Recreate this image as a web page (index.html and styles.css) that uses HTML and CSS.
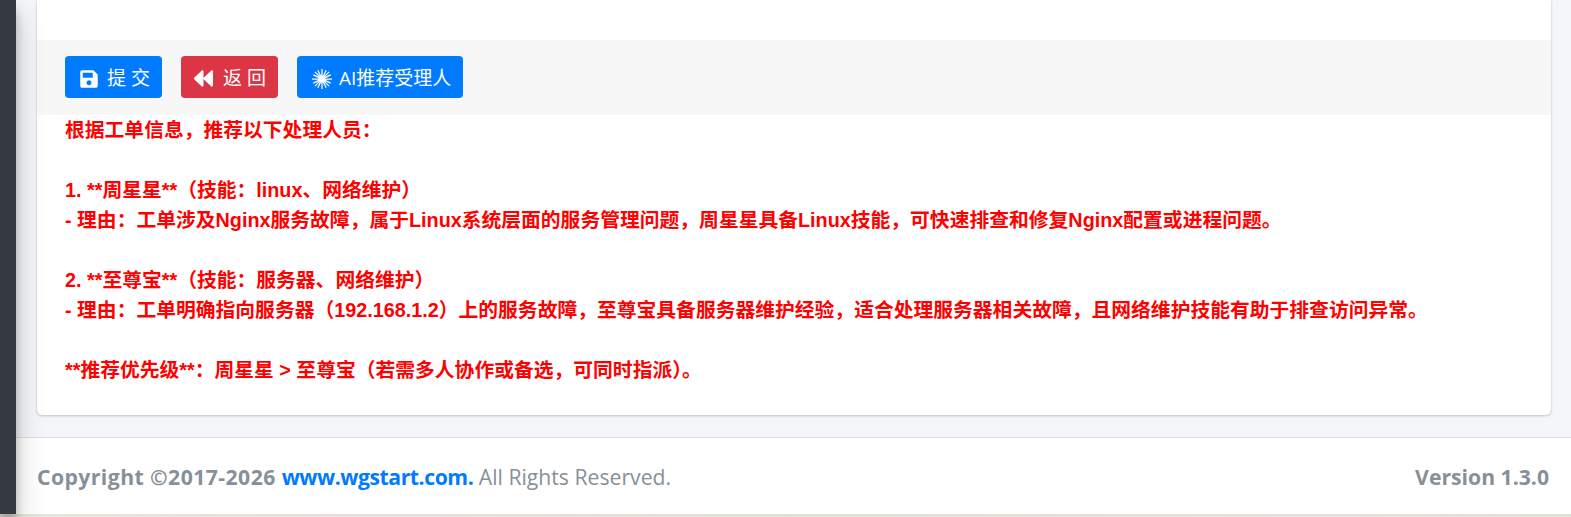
FILE: index.html
```html
<!DOCTYPE html>
<html lang="en">
<head>
  <meta charset="UTF-8">
  <meta name="viewport" content="width=device-width, initial-scale=1.0">
  <title>工单</title>
  <link rel="stylesheet" href="styles.css">
</head>
<body>
  <div class="wrapper">
    <aside class="sidebar"></aside>
    <div class="content-wrapper">
      <main class="content">
        <div class="card">
          <div class="card-top"></div>
          <div class="card-footer">
            <button type="button" class="btn btn-primary btn-save">
              <svg class="icon" viewBox="0 0 448 512"><path d="M433.941 129.941l-83.882-83.882A48 48 0 0 0 316.118 32H48C21.49 32 0 53.49 0 80v352c0 26.51 21.49 48 48 48h352c26.51 0 48-21.49 48-48V163.882a48 48 0 0 0-14.059-33.941zM224 416c-35.346 0-64-28.654-64-64 0-35.346 28.654-64 64-64s64 28.654 64 64c0 35.346-28.654 64-64 64zm96-304.52V212c0 6.627-5.373 12-12 12H76c-6.627 0-12-5.373-12-12V108c0-6.627 5.373-12 12-12h228.52c3.183 0 6.235 1.264 8.485 3.515l3.48 3.48A11.996 11.996 0 0 1 320 111.48z"/></svg>
              <span>提 交</span>
            </button>
            <button type="button" class="btn btn-danger btn-back">
              <svg class="icon icon-back" viewBox="0 56 512 400" preserveAspectRatio="none"><path d="M11.5 280.6l192 160c20.6 17.2 52.5 2.8 52.5-24.6V96c0-27.4-31.9-41.8-52.5-24.6l-192 160c-15.3 12.8-15.3 36.4 0 49.2zm256 0l192 160c20.6 17.2 52.5 2.8 52.5-24.6V96c0-27.4-31.9-41.8-52.5-24.6l-192 160c-15.3 12.8-15.3 36.4 0 49.2z"/></svg>
              <span>返 回</span>
            </button>
            <button type="button" class="btn btn-primary btn-ai">
              <svg class="icon icon-burst" viewBox="0 0 24 24"><circle cx="12" cy="12" r="3.5"/><path d="M12 0v24M0 12h24M3.5 3.5l17 17M20.5 3.5l-17 17M7 1.5l10 21M17 1.5L7 22.5M1.5 7l21 10M22.5 7l-21 10"/></svg>
              <span>AI推荐受理人</span>
            </button>
          </div>
          <div class="recommend">根据工单信息，推荐以下处理人员：

1. **周星星**（技能：linux、网络维护）
- 理由：工单涉及Nginx服务故障，属于Linux系统层面的服务管理问题，周星星具备Linux技能，可快速排查和修复Nginx配置或进程问题。

2. **至尊宝**（技能：服务器、网络维护）
- 理由：工单明确指向服务器（192.168.1.2）上的服务故障，至尊宝具备服务器维护经验，适合处理服务器相关故障，且网络维护技能有助于排查访问异常。

**推荐优先级**：周星星 &gt; 至尊宝（若需多人协作或备选，可同时指派）。</div>
        </div>
      </main>
      <footer class="main-footer">
        <div class="copyright"><strong>Copyright ©2017-2026 <a href="#">www.wgstart.com.</a></strong> All Rights Reserved.</div>
        <div><strong>Version 1.3.0</strong></div>
      </footer>
    </div>
  </div>
  <div class="desktop-strip"></div>
</body>
</html>
```

FILE: styles.css
```css
* {
  box-sizing: border-box;
}

html, body {
  margin: 0;
  height: 517px;
  overflow: hidden;
}

body {
  font-family: "Open Sans", "Noto Sans CJK SC", sans-serif;
  font-size: 21.2px;
  background-color: #fff;
}

.wrapper {
  display: flex;
  height: 514px;
}

.sidebar {
  width: 16px;
  flex-shrink: 0;
  background-color: #343a40;
  box-shadow: 0 14px 28px rgba(0, 0, 0, 0.25), 0 10px 10px rgba(0, 0, 0, 0.22);
  position: relative;
  z-index: 2;
}

.content-wrapper {
  flex: 1;
  display: flex;
  flex-direction: column;
  background-color: #f4f6f9;
  min-width: 0;
}

.content {
  flex: 1;
  padding: 0 20px 22px 21px;
}

.card {
  height: 415px;
  display: flex;
  flex-direction: column;
  background-color: #fff;
  border-radius: 0 0 5px 5px;
  box-shadow: 0 0 1px rgba(0, 0, 0, 0.125), 0 1px 3px rgba(0, 0, 0, 0.2);
}

.card-top {
  height: 40px;
}

.card-footer {
  display: flex;
  gap: 19px;
  height: 75px;
  padding: 16px 28px 17px;
  background-color: #f7f7f7;
}

.btn {
  display: flex;
  align-items: center;
  height: 42px;
  border: none;
  border-radius: 4px;
  color: #fff;
  font-family: "Open Sans", "Noto Sans CJK SC", sans-serif;
  font-size: 19px;
  line-height: 1;
}

.btn-primary {
  background-color: #007bff;
}

.btn-danger {
  background-color: #dc3545;
}

.btn-save {
  gap: 9px;
  width: 97px;
  padding: 3px 0 0 15px;
}

.btn-back {
  gap: 10px;
  width: 97px;
  padding: 3px 0 0 13px;
}

.btn-ai {
  gap: 7px;
  width: 166px;
  padding: 3px 0 0 15px;
}

.icon {
  width: 18px;
  height: 20px;
  fill: #fff;
  flex-shrink: 0;
}

.icon-back {
  width: 19px;
  height: 17px;
}

.icon-burst {
  width: 20px;
  height: 20px;
  stroke: #fff;
  stroke-width: 1.5;
}

.recommend {
  padding: 0 28px;
  color: #f00;
  font-family: "Liberation Sans", "Noto Sans CJK SC", sans-serif;
  font-weight: 700;
  font-size: 19.8px;
  line-height: 30px;
  white-space: pre-line;
}

.main-footer {
  display: flex;
  justify-content: space-between;
  align-items: center;
  height: 77px;
  padding: 0 22px 0 21px;
  border-top: 1px solid #dee2e6;
  background-color: #fff;
  color: #869099;
}

.main-footer a {
  color: #007bff;
  text-decoration: none;
}

.copyright strong {
  letter-spacing: 0.43px;
}

.copyright a {
  letter-spacing: -0.45px;
}

.desktop-strip {
  height: 3px;
  background: linear-gradient(90deg, #e4e8d8, #eadfe0 25%, #dfe4d0 50%, #eadfe0 85%, #dfe4d0);
}
```
